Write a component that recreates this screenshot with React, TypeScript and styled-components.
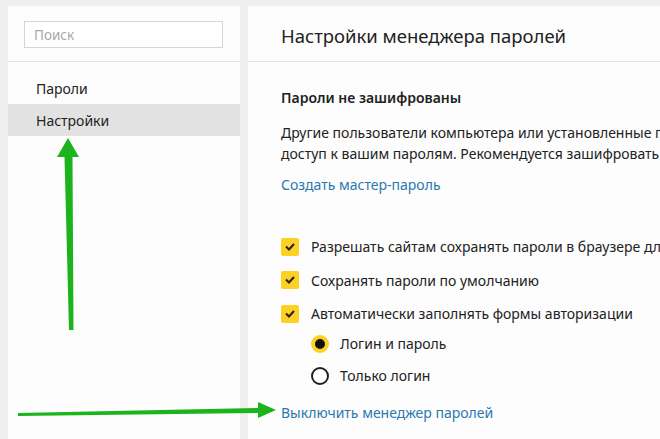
import styled, { createGlobalStyle } from "styled-components";

const GlobalStyle = createGlobalStyle`
  html, body {
    margin: 0;
    padding: 0;
    background: #f0efed;
    overflow: hidden;
  }
  body {
    font-family: "Noto Sans", "Open Sans", sans-serif;
    color: #222;
  }
`;

const App = () => {
  return (
    <WrapperStyled>
      <GlobalStyle />
      <SidebarStyled>
        <SearchBoxStyled>
          <input placeholder="Поиск" />
        </SearchBoxStyled>
        <MenuStyled>
          <MenuItemStyled>Пароли</MenuItemStyled>
          <MenuItemStyled $active>Настройки</MenuItemStyled>
        </MenuStyled>
      </SidebarStyled>
      <MainStyled>
        <TitleStyled>Настройки менеджера паролей</TitleStyled>
        <ContentStyled>
          <SectionTitleStyled>Пароли не зашифрованы</SectionTitleStyled>
          <ParagraphStyled>
            Другие пользователи компьютера или установленные программы могут получить
            <br />
            доступ к вашим паролям. Рекомендуется зашифровать их мастер-паролем.
          </ParagraphStyled>
          <LinkStyled>Создать мастер-пароль</LinkStyled>
          <OptionsStyled>
            <CheckRowStyled>
              <CheckBoxStyled>
                <CheckMark />
              </CheckBoxStyled>
              Разрешать сайтам сохранять пароли в браузере для автоматического входа
            </CheckRowStyled>
            <CheckRowStyled>
              <CheckBoxStyled>
                <CheckMark />
              </CheckBoxStyled>
              Сохранять пароли по умолчанию
            </CheckRowStyled>
            <CheckRowStyled>
              <CheckBoxStyled>
                <CheckMark />
              </CheckBoxStyled>
              Автоматически заполнять формы авторизации
            </CheckRowStyled>
            <RadioGroupStyled>
              <RadioRowStyled>
                <RadioStyled $checked />
                Логин и пароль
              </RadioRowStyled>
              <RadioRowStyled>
                <RadioStyled />
                Только логин
              </RadioRowStyled>
            </RadioGroupStyled>
          </OptionsStyled>
          <LinkStyled $gap={11}>Выключить менеджер паролей</LinkStyled>
        </ContentStyled>
      </MainStyled>
      <ArrowsStyled width="660" height="439" viewBox="0 0 660 439">
        <polygon points="70.5,330 73.5,330 72.5,157 79,157 68,138 57,157 64.5,157 69,330" fill="#1db31d" />
        <polygon points="18,416 18,413 258,408 258,402 276,410 258,418 258,413" fill="#1db31d" />
      </ArrowsStyled>
    </WrapperStyled>
  );
};

const CheckMark = () => (
  <svg width="12" height="10" viewBox="0 0 12 10">
    <path d="M2 4.5 L5 7.5 L10 2" fill="none" stroke="#222" strokeWidth="2" />
  </svg>
);

const WrapperStyled = styled.div`
  position: relative;
  display: flex;
  gap: 8px;
  height: 439px;
  width: 660px;
  padding: 6px 0 0 8px;
  box-sizing: border-box;
  overflow: hidden;
`;

const SidebarStyled = styled.div`
  display: flex;
  flex-direction: column;
  width: 232px;
  flex-shrink: 0;
  background: #fdfdfd;
`;

const SearchBoxStyled = styled.div`
  height: 56px;
  border-bottom: 1px solid #e4e4e4;
  padding: 15px 0 0 16px;
  box-sizing: border-box;
  input {
    width: 199px;
    height: 27px;
    box-sizing: border-box;
    border: 1px solid #d6d6d6;
    padding: 0 9px;
    font-family: "Noto Sans", sans-serif;
    font-size: 13.5px;
    outline: none;
  }
  input::placeholder {
    color: #a8a8a8;
  }
`;

const MenuStyled = styled.div`
  display: flex;
  flex-direction: column;
  padding-top: 10px;
`;

const MenuItemStyled = styled.div<{ $active?: boolean }>`
  height: 32px;
  display: flex;
  align-items: center;
  padding-left: 28px;
  font-size: 14px;
  background: ${(p) => (p.$active ? "#e2e2e2" : "transparent")};
`;

const MainStyled = styled.div`
  flex: 1;
  display: flex;
  flex-direction: column;
  background: #fdfdfd;
  min-width: 0;
`;

const TitleStyled = styled.div`
  height: 56px;
  border-bottom: 1px solid #e4e4e4;
  box-sizing: border-box;
  display: flex;
  align-items: center;
  padding: 3px 0 0 33px;
  font-size: 18.5px;
  white-space: nowrap;
`;

const ContentStyled = styled.div`
  display: flex;
  flex-direction: column;
  padding: 26px 0 0 33px;
  white-space: nowrap;
`;

const SectionTitleStyled = styled.div`
  font-size: 14px;
  font-weight: 600;
  line-height: 20px;
`;

const ParagraphStyled = styled.div`
  margin-top: 14px;
  font-size: 14px;
  line-height: 21px;
`;

const LinkStyled = styled.div<{ $gap?: number }>`
  font-size: 14px;
  line-height: 20px;
  color: #2b78b0;
  margin-top: ${(p) => p.$gap ?? 11}px;
`;

const OptionsStyled = styled.div`
  display: flex;
  flex-direction: column;
  margin-top: 35px;
`;

const CheckRowStyled = styled.div`
  display: flex;
  align-items: center;
  gap: 12px;
  height: 33.5px;
  font-size: 14px;
`;

const CheckBoxStyled = styled.span`
  width: 18px;
  height: 18px;
  border-radius: 2px;
  background: #fdd124;
  display: flex;
  align-items: center;
  justify-content: center;
  flex-shrink: 0;
`;

const RadioGroupStyled = styled.div`
  display: flex;
  flex-direction: column;
  margin-top: -3px;
`;

const RadioRowStyled = styled.div`
  display: flex;
  align-items: center;
  gap: 11px;
  height: 32px;
  padding-left: 30px;
  font-size: 14px;
`;

const RadioStyled = styled.span<{ $checked?: boolean }>`
  width: 18px;
  height: 18px;
  box-sizing: border-box;
  border-radius: 50%;
  flex-shrink: 0;
  border: ${(p) => (p.$checked ? "4px solid #fdd124" : "2px solid #222")};
  background: ${(p) => (p.$checked ? "#111" : "#fff")};
`;

const ArrowsStyled = styled.svg`
  position: absolute;
  left: 0;
  top: 0;
  pointer-events: none;
`;

export default App;
